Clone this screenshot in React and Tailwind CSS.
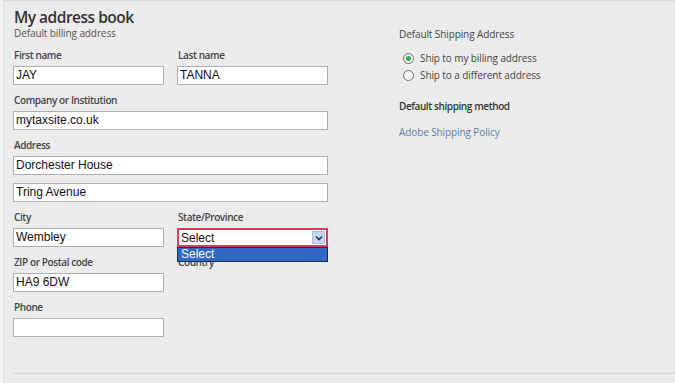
import React from 'react';

const labelCls = "block h-[14px] pl-[1px] text-[10px] leading-[14px] font-semibold text-[#444] tracking-[-0.4px]";
const inputCls = "block h-[19px] bg-white border border-[#a9b0b8] px-[2px] text-[12px] leading-[17px] text-[#111] font-['Liberation_Sans',Arial,sans-serif]";

const Field = ({ label, value, wide }) => (
  <div className="flex flex-col gap-[4px]">
    <span className={labelCls}>{label}</span>
    <div className={`${inputCls} ${wide ? 'w-[315px]' : 'w-[151px]'}`}>{value}</div>
  </div>
);

const Radio = ({ checked, label }) => (
  <div className="flex items-center gap-[6px] h-[17px]">
    <span className="w-[11px] h-[11px] rounded-full border border-[#6b6f73] bg-[#f7f7f7] flex items-center justify-center">
      {checked && <span className="w-[5px] h-[5px] rounded-full bg-[#2fae4a]" />}
    </span>
    <span className="text-[10px] text-[#444] tracking-[-0.1px]">{label}</span>
  </div>
);

export default function App() {
  return (
    <div className="w-[675px] h-[383px] bg-[#ececec] flex font-['Open_Sans',sans-serif] overflow-hidden">
      <div className="w-[4px] h-full bg-[#f4f4f4] border-r border-[#e2e2e2]" />
      <div className="flex-1 flex flex-col border-t border-[#d9d9d9]">
        <div className="flex-1 flex pl-[9px] pt-[7px]">
          {/* Billing column */}
          <div className="w-[386px] flex flex-col">
            <h1 className="pl-[1px] text-[15.5px] leading-[18px] font-semibold text-[#333] tracking-[-0.5px]">My address book</h1>
            <p className="pl-[1px] mt-[1px] text-[10px] leading-[13px] text-[#555] tracking-[-0.1px]">Default billing address</p>
            <div className="mt-[8px] flex flex-col gap-[8px]">
              <div className="flex gap-[13px]">
                <Field label="First name" value="JAY" />
                <Field label="Last name" value="TANNA" />
              </div>
              <Field label="Company or Institution" value="mytaxsite.co.uk" wide />
              <div className="flex flex-col gap-[8px]">
                <Field label="Address" value="Dorchester House" wide />
                <div className={`${inputCls} w-[315px]`}>Tring Avenue</div>
              </div>
              <div className="flex gap-[13px]">
                <Field label="City" value="Wembley" />
                <div className="flex flex-col gap-[4px] relative">
                  <span className={labelCls}>State/Province</span>
                  <div className="w-[151px] h-[19px] bg-white border-2 border-[#d23c5c] flex items-center justify-between pl-[2px] pr-[1px]">
                    <span className="text-[12px] text-[#111] font-['Liberation_Sans',Arial,sans-serif]">Select</span>
                    <span className="w-[13px] h-[13px] bg-[#c8d6f2] border border-[#a9bde6] flex items-center justify-center">
                      <svg width="8" height="6" viewBox="0 0 8 6"><path d="M1 1.5 L4 4.5 L7 1.5" fill="none" stroke="#1d3566" strokeWidth="1.6" /></svg>
                    </span>
                  </div>
                  <div className="absolute left-0 top-[37px] w-[151px] h-[15px] bg-[#3068c4] border border-[#1b2a48] z-10 pl-[3px] text-[12px] leading-[13px] text-white font-['Liberation_Sans',Arial,sans-serif]">Select</div>
                </div>
              </div>
              <div className="flex gap-[13px]">
                <Field label="ZIP or Postal code" value="HA9 6DW" />
                <span className={labelCls}>Country</span>
              </div>
              <Field label="Phone" value="" />
            </div>
          </div>
          {/* Shipping column */}
          <div className="flex flex-col pt-[19px]">
            <p className="text-[10px] leading-[14px] text-[#444] tracking-[-0.1px]">Default Shipping Address</p>
            <div className="mt-[9px] pl-[4px] flex flex-col">
              <Radio checked label="Ship to my billing address" />
              <Radio label="Ship to a different address" />
            </div>
            <p className="mt-[15px] text-[10px] leading-[14px] font-semibold text-[#333] tracking-[-0.4px]">Default shipping method</p>
            <p className="mt-[12px] text-[10px] leading-[14px] text-[#5b7ea8] tracking-[-0.1px]">Adobe Shipping Policy</p>
          </div>
        </div>
        <div className="ml-[9px] h-[10px] border-t border-[#d6d6d6]" />
      </div>
    </div>
  );
}
